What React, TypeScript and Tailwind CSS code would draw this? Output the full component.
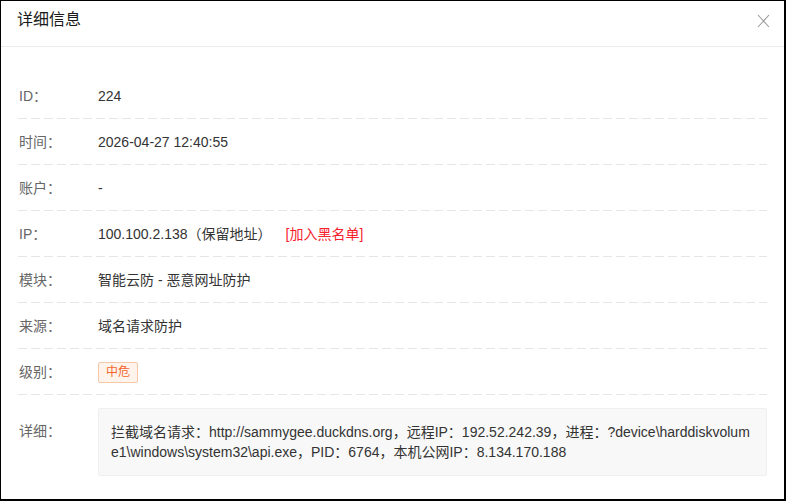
import React from "react";

const FONT = { fontFamily: '"Liberation Sans", "Noto Sans CJK SC", sans-serif' };

function Row({ label, children }: { label: string; children: React.ReactNode }) {
  return (
    <div className="relative h-[46px] flex items-center">
      <div className="w-[80px] pl-px text-[#666] text-[14px] leading-[20px]">{label}</div>
      <div className="flex items-center text-[#333] text-[14px] leading-[20px]">{children}</div>
      <div className="absolute left-0 right-0 bottom-0 h-px bg-[repeating-linear-gradient(to_right,#e6e6e6_0_9px,transparent_9px_13px)]" />
    </div>
  );
}

export default function App() {
  return (
    <div style={FONT} className="w-[786px] h-[501px] bg-white border-l border-t border-r-2 border-b-2 border-black flex flex-col overflow-hidden">
      <div className="h-[46px] shrink-0 border-b border-[#ebebeb] flex items-start justify-between pl-[16px] pr-[14px] pt-[9px]">
        <div className="text-[16px] leading-[20px] text-[#1a1a1a]">详细信息</div>
        <div className="mt-[4px] w-[14px] h-[14px] flex items-center justify-center">
          <svg width="13" height="14" viewBox="0 0 13 14">
            <path d="M1 1 L12 13 M12 1 L1 13" stroke="#999" strokeWidth="1.1" fill="none" />
          </svg>
        </div>
      </div>
      <div className="px-[17px] pt-[26px] flex flex-col">
        <Row label="ID：">224</Row>
        <Row label="时间：">2026-04-27 12:40:55</Row>
        <Row label="账户：">-</Row>
        <Row label="IP：">
          <span>100.100.2.138（保留地址）</span>
          <span className="ml-[14px] text-[#f5222d]">[加入黑名单]</span>
        </Row>
        <Row label="模块：">智能云防 - 恶意网址防护</Row>
        <Row label="来源：">域名请求防护</Row>
        <Row label="级别：">
          <span className="inline-flex items-center h-[21px] px-[7px] border border-[#f8c7a6] bg-[#fff4ec] text-[#f4662a] text-[12px] rounded-[2px]">中危</span>
        </Row>
        <div className="flex items-start pt-[13px]">
          <div className="w-[80px] pl-px mt-[13px] text-[#666] text-[14px] leading-[20px]">详细：</div>
          <div className="flex-1 bg-[#f8f8f8] border border-[#efefef] rounded-[2px] pl-[12px] pr-[12px] pt-[13px] pb-[13px] text-[#333] text-[14px] leading-[20px] break-all">
            拦截域名请求：http://sammygee.duckdns.org，远程IP：192.52.242.39，进程：?device\harddiskvolume1\windows\system32\api.exe，PID：6764，本机公网IP：8.134.170.188
          </div>
        </div>
      </div>
    </div>
  );
}
